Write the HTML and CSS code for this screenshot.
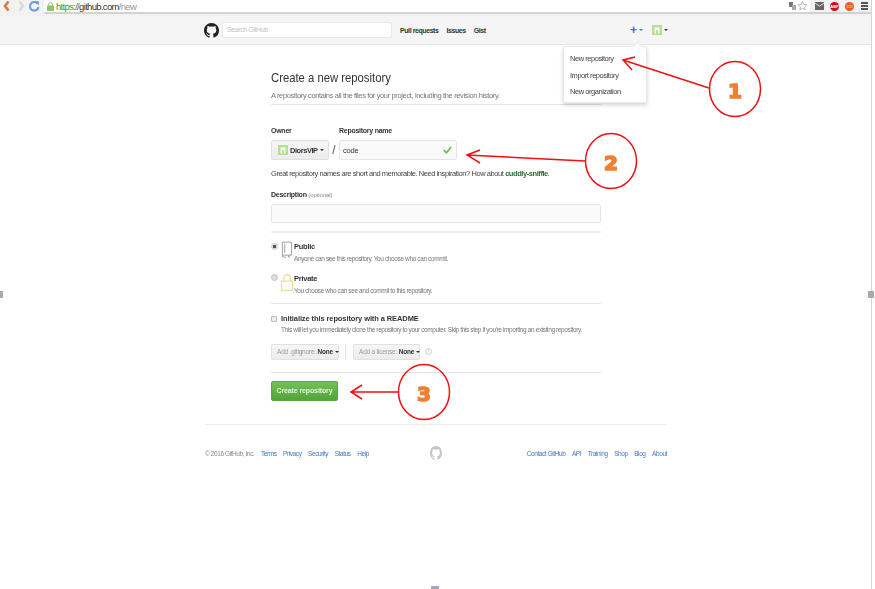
FILE: index.html
```html
<!DOCTYPE html>
<html lang="en">
<head>
<meta charset="utf-8">
<title>Create a new repository</title>
<link rel="stylesheet" href="styles.css">
</head>
<body>
<svg width="0" height="0" class="defs"><defs>
<path id="mark" d="M8 0C3.58 0 0 3.58 0 8c0 3.54 2.29 6.53 5.47 7.59.4.07.55-.17.55-.38 0-.19-.01-.82-.01-1.49-2.01.37-2.53-.49-2.69-.94-.09-.23-.48-.94-.82-1.13-.28-.15-.68-.52-.01-.53.63-.01 1.08.58 1.23.82.72 1.21 1.87.87 2.33.66.07-.52.28-.87.51-1.07-1.78-.2-3.64-.89-3.64-3.95 0-.87.31-1.59.82-2.15-.08-.2-.36-1.02.08-2.12 0 0 .67-.21 2.2.82.64-.18 1.32-.27 2-.27.68 0 1.36.09 2 .27 1.53-1.04 2.2-.82 2.2-.82.44 1.1.16 1.92.08 2.12.51.56.82 1.27.82 2.15 0 3.07-1.87 3.75-3.65 3.95.29.25.54.73.54 1.48 0 1.07-.01 1.93-.01 2.2 0 .21.15.46.55.38A8.013 8.013 0 0016 8c0-4.42-3.58-8-8-8z"/>
<g id="identicon"><rect width="10" height="10" fill="#b5e08f"/><path d="M2.5 8.5V2.500h5v6H6V5H4v3.500z" fill="#fff"/></g>
</defs></svg>
<div class="page">
  <div class="browser">
    <svg class="nav-icons" width="42" height="13" viewBox="0 0 42 13">
      <path d="M8.500 1.500L5 6l3.500 4.500" fill="none" stroke="#e0743c" stroke-width="2.600"/>
      <path d="M19.500 1.500L23 6l-3.500 4.500" fill="none" stroke="#d8d8d8" stroke-width="2.600"/>
      <path d="M37.500 3.500A4.300 4.300 0 1 0 38.500 7" fill="none" stroke="#6a9fd8" stroke-width="2.200"/>
      <path d="M34.500 1l4.500.2-.2 4.300z" fill="#6a9fd8"/>
    </svg>
    <div class="omnibox">
      <svg class="lock" width="7" height="9" viewBox="0 0 7 9"><path d="M1.500 4V2.600a2 2 0 0 1 4 0V4" fill="none" stroke="#8fbf6f"/><rect y="3.500" width="7" height="5.500" rx=".8" fill="#8fc46a"/></svg>
      <span class="url"><span class="url-https">https</span>://<span class="url-host">github.com</span><span class="url-path">/new</span></span>
      <svg class="omni-icons" width="19" height="10" viewBox="0 0 19 10">
        <rect x="0" y="1" width="4" height="5" fill="#777"/><rect x="3" y="4" width="4" height="5" fill="#aaa"/>
        <path d="M13.500.7l1.300 2.900 3 .3-2.300 2 .7 3-2.700-1.600-2.700 1.600.7-3-2.300-2 3-.3z" fill="#fff" stroke="#999" stroke-width=".7"/>
      </svg>
    </div>
    <div class="ext-icons">
      <svg width="9" height="8" viewBox="0 0 9 8"><rect width="9" height="8" fill="#666"/><path d="M0 1l4.500 3.200L9 1" fill="none" stroke="#ddd"/></svg>
      <span class="ext ext-abp">ABP</span>
      <span class="ext ext-orange">CO</span>
      <span class="menu-icon"><i></i><i></i><i></i></span>
    </div>
  </div>

  <header class="site-head">
    <div class="site-head-inner">
      <svg class="logo" width="15" height="15" viewBox="0 0 16 16"><use href="#mark" fill="#222"/></svg>
      <div class="search">Search GitHub</div>
      <nav class="head-nav"><a>Pull requests</a><a>Issues</a><a>Gist</a></nav>
      <div class="head-right">
        <span class="plus">+</span><span class="caret caret-blue"></span>
        <svg class="head-avatar" width="10" height="10" viewBox="0 0 10 10"><use href="#identicon"/></svg><span class="caret"></span>
      </div>
    </div>
  </header>

  <main class="main">
    <h1 class="title">Create a new repository</h1>
    <p class="lead">A repository contains all the files for your project, including the revision history.</p>
    <div class="name-row">
      <div class="owner">
        <label class="label">Owner</label>
        <div class="owner-btn"><svg width="10" height="10" viewBox="0 0 10 10"><use href="#identicon"/></svg><b>DiorsVIP</b><span class="caret"></span></div>
      </div>
      <span class="slash">/</span>
      <div class="repo">
        <label class="label">Repository name</label>
        <div class="text-input repo-input"><span>code</span>
          <svg width="9" height="8" viewBox="0 0 9 8"><path d="M.800 4.200L3.300 6.800 8.200 1" fill="none" stroke="#6cc04a" stroke-width="1.700"/></svg>
        </div>
      </div>
    </div>
    <p class="hint">Great repository names are short and memorable. Need inspiration? How about <a class="suggest">cuddly-sniffle</a>.</p>
    <label class="label desc-label">Description <span class="optional">(optional)</span></label>
    <div class="text-input desc-input"></div>
    <hr class="rule rule-thick">
    <div class="vis vis-public">
      <span class="radio radio-on"></span>
      <svg class="vis-icon" width="12" height="19" viewBox="0 0 13 19"><path d="M1.500.5h10v14h-10zM1.500 14.500v2h3M8 14.500v2h2M4 2v10" fill="none" stroke="#999"/><path d="M4 17.500l1-1 1 1z" fill="#999"/></svg>
      <div><strong>Public</strong><small>Anyone can see this repository. You choose who can commit.</small></div>
    </div>
    <div class="vis vis-private">
      <span class="radio"></span>
      <svg class="vis-icon" width="12" height="19" viewBox="0 0 13 19"><path d="M3 8V4.500a3.500 3.500 0 0 1 7 0V8" fill="none" stroke="#ead89a" stroke-width="1.300"/><rect x=".7" y="8" width="11.600" height="10" fill="#fff" stroke="#e8d48c"/></svg>
      <div><strong>Private</strong><small>You choose who can see and commit to this repository.</small></div>
    </div>
    <hr class="rule">
    <div class="init">
      <span class="check"></span>
      <div><strong>Initialize this repository with a README</strong><small>This will let you immediately clone the repository to your computer. Skip this step if you're importing an existing repository.</small></div>
    </div>
    <div class="add-row">
      <div class="small-btn btn-ignore">Add .gitignore: <b>None</b><span class="caret"></span></div>
      <span class="divider"></span>
      <div class="small-btn btn-license">Add a license: <b>None</b><span class="caret"></span></div>
      <span class="info">i</span>
    </div>
    <hr class="rule rule-c">
    <div class="create">Create repository</div>
  </main>

  <footer class="foot">
    <div class="foot-left"><span class="copy">© 2016 GitHub, Inc.</span><a>Terms</a><a>Privacy</a><a>Security</a><a>Status</a><a>Help</a></div>
    <svg class="foot-mark" width="12" height="14" viewBox="0 0 16 16" preserveAspectRatio="none"><use href="#mark" fill="#c4c4c4"/></svg>
    <div class="foot-right"><a>Contact GitHub</a><a>API</a><a>Training</a><a>Shop</a><a>Blog</a><a>About</a></div>
  </footer>

  <div class="menu">
    <span class="menu-tip"></span>
    <a>New repository</a><a>Import repository</a><a>New organization</a>
  </div>

  <svg class="notes" width="875" height="589" viewBox="0 0 875 589">
    <g fill="none" stroke="#f01010" stroke-width="1.500">
      <ellipse cx="735" cy="89" rx="25.500" ry="27.500"/>
      <path d="M709 88L623 60M635 57L623 60L632 70"/>
      <ellipse cx="611" cy="161" rx="25.500" ry="27.500"/>
      <path d="M585 161L467 155M480 150L467 155L480 163"/>
      <ellipse cx="424" cy="392" rx="25.500" ry="27.500"/>
      <path d="M398 392H351M362 385L351 392L362 399"/>
    </g>
    <g class="note-num">
      <text x="735" y="97.500">1</text>
      <text x="611" y="169.500">2</text>
      <text x="424" y="400.500">3</text>
    </g>
  </svg>
</div>
<i class="handle handle-l"></i><i class="handle handle-r"></i><i class="handle handle-b"></i>
</body>
</html>
```
FILE: styles.css
```css
* { box-sizing: border-box; }
html, body { margin: 0; padding: 0; }
body { position: relative; width: 875px; height: 589px; background: #fff; font-family: "Liberation Sans", Arial, sans-serif; color: #333; overflow: hidden; }
.defs { position: absolute; }
.page { position: relative; width: 872px; height: 589px; overflow: hidden; filter: blur(.35px); border-right: 1px solid #d4d4d4; }
a { color: inherit; text-decoration: none; }
p, h1 { margin: 0; }

.browser { height: 16px; display: flex; align-items: flex-start; background: #f2f2f2; }
.nav-icons { flex: none; width: 44px; padding-right: 2px; }
.omnibox { flex: 1; height: 14px; background: #fff; border-bottom: 2px solid #d2d2d2; display: flex; align-items: center; padding-left: 3px; }
.lock { flex: none; margin-right: 2px; }
.url { font-size: 9.500px; letter-spacing: -.68px; color: #666; }
.url-https { color: #3c9a22; }
.url-host { color: #333; }
.url-path { color: #999; }
.omni-icons { margin-left: auto; margin-right: 2px; }
.ext-icons { flex: none; width: 61px; height: 14px; display: flex; align-items: center; gap: 6px; padding-left: 5px; border-bottom: 2px solid #d2d2d2; }
.ext { width: 9px; height: 9px; border-radius: 50%; font-size: 4px; font-weight: bold; color: #fff; display: flex; justify-content: center; align-items: center; overflow: hidden; }
.ext-abp { background: #c8101c; }
.ext-orange { background: #ee5a28; color: #ffd080; }
.menu-icon { display: flex; flex-direction: column; gap: 1px; margin-left: 1px; }
.menu-icon i { width: 7px; height: 2px; background: #555; display: block; }

.site-head { height: 29px; background: #f5f5f5; border-bottom: 1px solid #e5e5e5; padding-left: 204px; }
.site-head-inner { display: flex; align-items: center; height: 28px; width: 464px; }
.logo { flex: none; }
.search { width: 170px; height: 16px; margin-left: 3px; background: #fff; border: 1px solid #e8e8e8; border-radius: 2px; font-size: 7px; letter-spacing: -.4px; color: #c4c4c4; line-height: 14px; padding-left: 4px; }
.head-nav { display: flex; gap: 8px; margin-left: 8px; font-size: 7px; letter-spacing: -.42px; font-weight: bold; color: #333; }
.head-right { margin-left: auto; display: flex; align-items: center; }
.plus { color: #4078c0; font-size: 12px; font-weight: bold; line-height: 14px; }
.caret { display: inline-block; flex: none; width: 0; height: 0; border: 2px solid transparent; border-top: 2.500px solid #333; border-bottom: 0; margin-left: 2px; }
.caret-blue { border-top-color: #4078c0; margin-right: 9px; }
.head-avatar { flex: none; }

.main { width: 330px; margin-left: 271px; }
.title { font-size: 13.500px; font-weight: normal; color: #333; line-height: 16px; margin-top: 25px; transform: scaleX(.836); transform-origin: left center; white-space: nowrap; }
.lead { font-size: 7.500px; letter-spacing: -.36px; color: #777; line-height: 10px; margin-top: 5px; padding-bottom: 3px; border-bottom: 1px solid #e5e5e5; }
.name-row { display: flex; margin-top: 21px; }
.label { display: block; font-size: 7px; letter-spacing: -.26px; font-weight: bold; color: #333; line-height: 10px; margin-bottom: 4px; }
.owner-btn { width: 58px; height: 20px; display: flex; align-items: center; padding-left: 6px; background: linear-gradient(#f6f6f6, #ececec); border: 1px solid #e0e0e0; border-radius: 2px; font-size: 7.500px; letter-spacing: -.45px; }
.owner-btn b { margin-left: 2px; }
.slash { margin: 14px 0 0; width: 10px; text-align: center; font-size: 12px; color: #555; line-height: 20px; }
.text-input { background: #fafafa; border: 1px solid #e5e5e5; border-radius: 2px; height: 20px; }
.repo-input { width: 118px; display: flex; justify-content: space-between; align-items: center; padding: 0 4px 0 3px; font-size: 7.500px; letter-spacing: -.2px; color: #333; }
.hint { font-size: 7.500px; letter-spacing: -.43px; color: #444; line-height: 10px; margin-top: 9px; white-space: nowrap; }
.suggest { color: #2f6b34; font-weight: bold; }
.desc-label { margin-top: 11px; }
.optional { font-size: 6px; letter-spacing: -.1px; font-weight: normal; color: #888; }
.desc-input { height: 19px; }
.rule { border: 0; border-top: 1px solid #e5e5e5; margin: 0; }
.rule-thick { border-top-width: 2px; margin-top: 8px; border-top-color: #efefef; }
.vis { display: flex; align-items: flex-start; height: 32px; }
.vis-public { margin-top: 8px; }
.vis-private { height: 30px; }
.radio { width: 7px; height: 7px; border-radius: 50%; margin: 2px 3px 0 0; background: #ddd; border: 1px solid #c4c4c4; flex: none; }
.vis-private .radio { margin-top: 1px; }
.radio-on { background: radial-gradient(circle, #555 0 1.500px, #e2e2e2 2px); }
.vis-icon { flex: none; margin-right: 1px; }
.vis strong, .init strong { display: block; font-size: 7.500px; letter-spacing: -.25px; color: #333; line-height: 10px; }
.vis strong { margin-top: 1px; }
.init strong { letter-spacing: -.1px; }
.vis small, .init small { display: block; font-size: 6.500px; letter-spacing: -.38px; color: #777; line-height: 9px; margin-top: 2px; white-space: nowrap; }
.init small { margin-top: 1px; }
.init { display: flex; margin-top: 10px; }
.check { flex: none; width: 6px; height: 6px; margin: 2px 4px 0 0; background: #eee; border: 1px solid #b8b8c0; border-radius: 1px; }
.add-row { display: flex; align-items: center; margin-top: 9px; height: 17px; }
.small-btn { height: 16px; display: flex; align-items: center; background: linear-gradient(#f6f6f6, #ececec); border: 1px solid #e0e0e0; border-radius: 2px; font-size: 6.500px; letter-spacing: -.2px; color: #999; padding-left: 5px; white-space: pre; }
.small-btn b { color: #333; }
.btn-ignore { width: 68px; }
.btn-license { width: 67px; }
.divider { width: 1px; height: 16px; background: #e2e2e2; margin: 0 7px 0 6px; }
.info { width: 7px; height: 7px; border: 1px solid #ccc; border-radius: 50%; margin-left: 5px; font-size: 5px; line-height: 5px; color: #aaa; text-align: center; }
.rule-c { margin-top: 12px; }
.create { width: 67px; height: 20px; margin-top: 8px; background: linear-gradient(#74c058, #50a638); border: 1px solid #5aa840; border-radius: 2px; color: #e4f2da; font-size: 7px; font-weight: bold; letter-spacing: -.12px; line-height: 18px; text-align: center; white-space: nowrap; }

.foot { width: 462px; margin: 23px 0 0 205px; padding-top: 18px; border-top: 1px solid #eee; display: grid; grid-template-columns: 1fr auto 1fr; align-items: center; font-size: 6.500px; letter-spacing: -.41px; color: #4078c0; height: 39px; }
.foot-left, .foot-right { display: flex; gap: 6.500px; white-space: nowrap; }
.foot-right { justify-content: flex-end; }
.copy { color: #888; }

.menu { position: absolute; left: 563px; top: 46px; width: 84px; height: 57px; background: #fff; border: 1px solid #e8e8e8; border-radius: 2px; box-shadow: 0 2px 4px rgba(0,0,0,.18); padding-top: 4px; font-size: 7.500px; letter-spacing: -.46px; color: #444; }
.menu a { display: block; height: 16.500px; line-height: 16.500px; padding-left: 6px; }
.menu-tip { position: absolute; right: 5px; top: -4px; width: 7px; height: 7px; background: #fff; border: 1px solid #e8e8e8; border-width: 1px 0 0 1px; transform: rotate(45deg); }

.notes { position: absolute; left: 0; top: 0; }
.note-num text { font-family: "DejaVu Sans", sans-serif; font-weight: bold; font-size: 20px; fill: #f08030; stroke: #f08030; stroke-width: 1.600; text-anchor: middle; }

.handle { position: absolute; background: #a9a9b4; }
.handle-l { left: 0; top: 291px; width: 3px; height: 7px; }
.handle-r { left: 868px; top: 291px; width: 6px; height: 7px; }
.handle-b { left: 431px; top: 586px; width: 8px; height: 3px; }
```
